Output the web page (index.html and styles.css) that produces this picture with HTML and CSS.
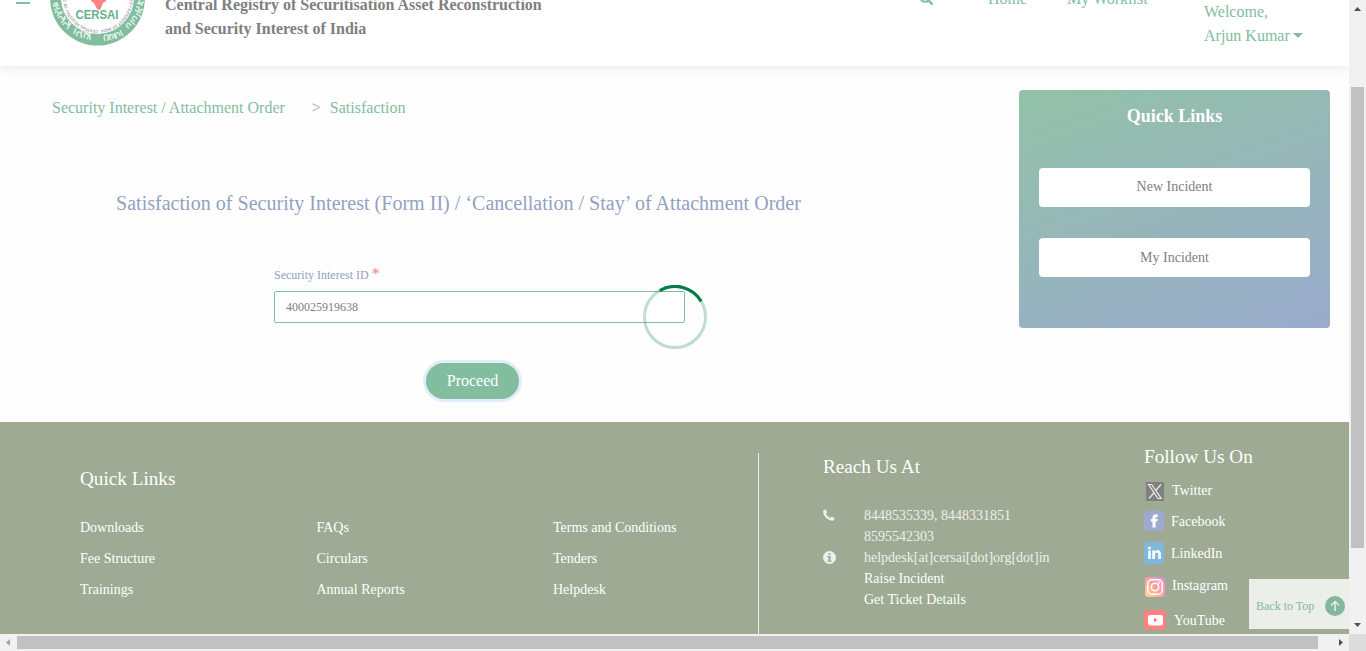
FILE: index.html
```html
<!DOCTYPE html>
<html lang="en">
<head>
<meta charset="utf-8">
<title>Satisfaction of Security Interest</title>
<link rel="stylesheet" href="styles.css">
</head>
<body>
<div class="viewport">
  <div class="page">
    <header class="header">
      <div class="menu"><i></i><i></i><i></i></div>
      <svg class="logo" viewBox="0 0 96 96">
        <defs>
          <path id="ringTop" d="M48 80a32 32 0 0 1 0-64a32 32 0 0 1 0 64"/>
        </defs>
        <circle cx="47.500" cy="48" r="47.500" fill="#82bda0"/>
        <circle cx="47.500" cy="47.500" r="36.500" fill="#fff"/>
        <path d="M36 48l3-4 6 1 8 8-2 4-7-7z" fill="#fbd77f"/>
        <path d="M42 46h15l-1 5-3 2-3 7-3-1-3-6-3-2z" fill="#ff8080"/>
        <text class="logo-small"><textPath href="#ringTop" textLength="198">CENTRAL REGISTRY OF SECURITISATION ASSET RECONSTRUCTION AND SECURITY INTEREST OF INDIA</textPath></text>
        <text class="logo-name" x="25.500" y="69" textLength="43" lengthAdjust="spacingAndGlyphs">CERSAI</text>
        <g fill="none" stroke="#dceee4" stroke-width="1.500">
          <path d="M3 54l5-1m-5 3l6-1m-3-3l1 6M4 60l6-2m-5 5q2-3 3 0t3-2M7 66l6-4m-5 6q3-3 4 0t3-2M11 73l5-5m-3 7q2-4 4-1t2-3M17 79l4-6"/>
          <path d="M24 84l2-6m1 8q-1-4 2-4t2 4m1-6l-1 8m3 0q0-5 3-4t0 5m3-5v6m-6-8l7 2"/>
          <path d="M55 91q-2-6 1-6t2 4 2-5m1 6q-3-4 0-5t2 4m1-6l2 6m1-1q-3-4 0-5t3 3m0-6l3 6"/>
          <path d="M79 78q-4-2-2-4t4 2m-1-6l5 5m0-4q-4-2-2-4t4 2m-1-6l5 4M85 60l6 3m-5-6q4-1 3 2t4 0m-6-6l6 2m-6-6q4 0 2 3t5 0"/>
        </g>
      </svg>
      <div class="org">Central Registry of Securitisation Asset Reconstruction<br>and Security Interest of India</div>
      <nav class="nav">
        <svg class="search" viewBox="0 0 16 16"><circle cx="6.5" cy="6.5" r="5" fill="none" stroke="#82bda0" stroke-width="2.3"/><path d="M10 10l4.5 4.5" stroke="#82bda0" stroke-width="2.6"/></svg>
        <span class="home">Home</span>
        <span class="worklist">My Worklist</span>
      </nav>
      <div class="user">Welcome,<br>Arjun Kumar <b class="caret"></b></div>
    </header>
    <main class="main">
      <section class="content">
        <div class="crumbs"><span>Security Interest / Attachment Order</span><span class="gt">&gt;</span><span>Satisfaction</span></div>
        <h1 class="title">Satisfaction of Security Interest (Form II) / ‘Cancellation / Stay’ of Attachment Order</h1>
        <div class="form">
          <div class="label">Security Interest ID <span class="star">*</span></div>
          <div class="input">400025919638</div>
          <div class="proceed">Proceed</div>
        </div>
      </section>
      <aside class="side">
        <h2>Quick Links</h2>
        <div class="side-link">New Incident</div>
        <div class="side-link second">My Incident</div>
      </aside>
    </main>
    <footer class="footer">
      <section class="quick">
        <h3>Quick Links</h3>
        <div class="links">
          <span>Downloads</span><span>FAQs</span><span>Terms and Conditions</span>
          <span>Fee Structure</span><span>Circulars</span><span>Tenders</span>
          <span>Trainings</span><span>Annual Reports</span><span>Helpdesk</span>
        </div>
      </section>
      <section class="reach">
        <h3>Reach Us At</h3>
        <div class="contact">
          <svg viewBox="0 0 12 12"><path d="M.3 1.7Q1 .4 2.6.2L4.2 3.3 2.9 4.7Q4 7.5 7.2 9L8.6 7.6 11.6 9.3Q11.500 11 10 11.700C5 12.200-.8 6 .3 1.700z" fill="#efefef"/></svg>
          <span>8448535339, 8448331851</span>
          <i></i><span>8595542303</span>
          <svg class="info" viewBox="0 0 12 12"><circle cx="6" cy="6" r="6" fill="#efefef"/><path d="M5 2h2v1.600H5zM4.200 4.700H7v4h1V10H4.200V8.700H5V6h-.8z" fill="#9eaa93"/></svg>
          <span>helpdesk[at]cersai[dot]org[dot]in</span>
          <i></i><span class="bright">Raise Incident</span>
          <i></i><span class="bright">Get Ticket Details</span>
        </div>
      </section>
      <section class="follow">
        <h3>Follow Us On</h3>
        <div class="soc tw"><svg width="18" height="19" viewBox="0 0 18 19"><path d="M0 0h18v19H0z" fill="#808080"/><path d="M2.500 2.500h3.200l9.500 14H12zM15 2.500L9.800 8.400M7.800 11L3 16.500" fill="none" stroke="#ececec" stroke-width="1.200"/></svg><span>Twitter</span></div>
        <div class="soc fb"><svg width="20" height="20" viewBox="0 0 20 20"><rect width="20" height="20" rx="3.500" fill="#9da9cf"/><path d="M8.500 16.500V10.500H6.800V8h1.700V6.500Q8.500 3.500 11.500 3.500H13.800V6H12.500Q11.500 6 11.500 7V8h2.200l-.4 2.500h-1.800v6z" fill="#fff"/></svg><span>Facebook</span></div>
        <div class="soc li"><svg width="20" height="22" viewBox="0 0 20 22"><rect width="20" height="22" rx="3.500" fill="#80b8dc"/><path d="M4.200 8.500h2.600V17H4.200zM8.300 8.500h2.500v1.200Q12 8.200 13.800 8.300 16.900 8.500 16.900 12v5h-2.600v-4.600q0-1.900-1.500-1.900-1.900 0-1.900 2.100V17H8.300z" fill="#fff"/><circle cx="5.500" cy="6" r="1.500" fill="#fff"/></svg><span>LinkedIn</span></div>
        <div class="soc ig"><svg width="20" height="20" viewBox="0 0 20 20"><defs><linearGradient id="ig" x1="0" y1="1" x2="1" y2="0"><stop offset="0" stop-color="#ffd98f"/><stop offset=".5" stop-color="#ff9f9f"/><stop offset="1" stop-color="#d794dd"/></linearGradient></defs><rect width="20" height="20" rx="3.500" fill="url(#ig)"/><g fill="none" stroke="#fff" stroke-width="1.500"><rect x="2.800" y="2.800" width="14.400" height="14.400" rx="4"/><circle cx="10" cy="10" r="3.700"/></g><circle cx="14.200" cy="5.800" r="1" fill="#fff"/></svg><span>Instagram</span></div>
        <div class="soc yt"><svg width="22" height="20" viewBox="0 0 22 20"><rect width="22" height="20" rx="3.500" fill="#ff8080"/><rect x="4" y="5" width="15" height="10.500" rx="2" fill="#fff"/><path d="M10 8v4l3.500-2z" fill="#ff6f6f"/></svg><span>YouTube</span></div>
      </section>
    </footer>
    <svg class="spinner" viewBox="0 0 64 64"><circle cx="32" cy="32" r="30.500" fill="none" stroke="#007d46" stroke-opacity=".25" stroke-width="3"/><path d="M16.800 5.600A30.500 30.500 0 0 1 58.200 16.400" fill="none" stroke="#007d46" stroke-width="3.200"/></svg>
    <div class="totop"><span>Back to Top</span><svg viewBox="0 0 20 20"><circle cx="10" cy="10" r="10" fill="#82b89d"/><path d="M10 15V6M6 9.500l4-4 4 4" fill="none" stroke="#e8efe9" stroke-width="1.500"/></svg></div>
  </div>
  <div class="vbar"><svg width="17" height="634"><path d="M0 0h17v634H0z" fill="#f1f1f1"/><path d="M2 87h13v461H2z" fill="#c1c1c1"/><path d="M5 11l3.500-4 3.500 4zM5 623h7l-3.500 4z" fill="#505050"/></svg></div>
  <div class="hbar"><svg width="1349" height="17"><path d="M0 0h1349v17H0z" fill="#f1f1f1"/><path d="M17 2h1301v13H17z" fill="#c1c1c1"/><path d="M10 5v7l-4-3.500z" fill="#a3a3a3"/><path d="M1339 5v7l4-3.500z" fill="#505050"/></svg></div>
  <div class="corner"></div>
</div>
</body>
</html>
```
FILE: styles.css
```css
* { box-sizing: border-box; }
body { margin: 0; font-family: "Liberation Serif", "Times New Roman", serif; overflow: hidden; }
h1, h2, h3 { margin: 0; font-weight: 400; white-space: nowrap; }
svg { display: block; flex: none; }
.viewport { display: grid; grid-template-columns: 1349px 17px; grid-template-rows: 634px 17px; width: 1366px; height: 651px; }
.page { position: relative; overflow: hidden; background: #fefefe; }
.corner { background: #dcdcdc; }

.header { display: flex; align-items: flex-start; height: 126px; margin-top: -60px; background: #fff; box-shadow: 0 2px 10px rgba(0, 0, 0, .09); white-space: nowrap; font-size: 16px; color: #82bda0; }
.menu { width: 14px; margin: 52px 0 0 16px; }
.menu i { display: block; height: 2px; margin-bottom: 3px; background: #82bda0; }
.logo { width: 96px; height: 96px; margin: 10px 0 0 20px; }
.logo-small { font: 4.100px "Liberation Sans", Arial, sans-serif; fill: #777; }
.logo-name { font: bold 12.500px "Liberation Sans", Arial, sans-serif; fill: #62b38a; }
.org { width: 400px; margin: 53px 0 0 19px; font-weight: 700; line-height: 24px; letter-spacing: -.01px; color: #808080; }
.nav { display: flex; width: 639px; margin-top: 50px; line-height: 18px; }
.search { width: 15px; height: 15px; margin: 1px 54px 0 354px; }
.home { width: 79px; }
.user { line-height: 24px; margin-top: 60px; }
.caret { display: inline-block; margin-left: -1px; border: 5px solid transparent; border-top-color: #82bda0; border-bottom: 0; vertical-align: 3px; }

.main { display: flex; height: 356px; }
.content { width: 1019px; padding-top: 32px; }
.crumbs { display: flex; height: 20px; padding-left: 52px; line-height: 20px; font-size: 16px; color: #82bda0; white-space: nowrap; }
.gt { margin: 0 9px 0 27px; color: #a0a8a4; }
.title { margin: 72px 0 0 116px; line-height: 26px; font-size: 20px; letter-spacing: .025px; color: #93a1c3; }
.form { width: 411px; margin: 50px 0 0 274px; }
.label { height: 16px; line-height: 16px; font-size: 12px; color: #93a1c3; }
.star { font-size: 16px; color: #ff8080; }
.input { height: 32px; margin-top: 9px; padding-left: 11px; border: 1px solid #82bda0; border-radius: 2px; line-height: 30px; font-size: 12px; color: #808080; background: #fff; }
.proceed { width: 93px; height: 36px; margin: 40px 0 0 152px; border-radius: 18px; background: #82bda0; box-shadow: 0 0 0 3px #dfedff; color: #fff; text-align: center; line-height: 36px; font-size: 16px; }
.side { width: 311px; height: 238px; margin-top: 24px; padding: 14px 20px; border-radius: 4px; background: linear-gradient(160deg, #92c1a7, #9aabcc); text-align: center; }
.side h2 { height: 24px; margin-bottom: 40px; font-size: 18px; font-weight: 700; line-height: 24px; color: #fff; }
.side-link { height: 39px; margin-bottom: 31px; border-radius: 4px; background: #fff; font-size: 14px; line-height: 38px; color: #808080; }
.second { line-height: 40px; }

.footer { display: flex; height: 212px; background: #9eaa93; color: #fff; font-size: 14px; white-space: nowrap; }
.footer h3 { font-size: 19.200px; line-height: 24px; }
.quick { width: 758px; padding: 45px 0 0 80px; }
.links { display: grid; grid-template-columns: 236.500px 236.500px auto; grid-auto-rows: 31px; margin-top: 21px; line-height: 31px; }
.reach { width: 386px; margin-top: 31px; padding: 2px 0 0 64px; border-left: 1px solid #efefef; }
.contact { display: grid; grid-template-columns: 41px auto; grid-auto-rows: 21px; margin-top: 26px; line-height: 21px; color: #efefef; }
.contact svg { width: 12px; height: 12px; margin-top: 4px; }
.contact .info { width: 13px; height: 13px; }
.contact .bright { color: #fff; }
.follow { padding-top: 23px; }
.soc { display: flex; align-items: center; line-height: 20px; }
.tw span, .ig span { padding-bottom: 2px; }
.fb span, .li span, .yt span { padding-top: 2px; }
.tw { height: 19px; margin: 13px 0 0 2px; gap: 8px; }
.fb { height: 20px; margin-top: 10px; gap: 7px; }
.li { height: 22px; margin-top: 11px; gap: 7px; }
.ig { height: 20px; margin: 13px 0 0 1px; gap: 7px; }
.yt { height: 20px; margin-top: 13px; gap: 8px; }

.spinner { position: absolute; left: 643px; top: 285px; width: 64px; height: 64px; }
.totop { position: absolute; right: 0; top: 579px; display: flex; align-items: center; gap: 11px; width: 100px; height: 50px; padding: 4px 0 0 7px; background: #ebeee9; color: #82b89d; font-size: 12px; white-space: nowrap; }
.totop svg { width: 20px; height: 20px; }
```
